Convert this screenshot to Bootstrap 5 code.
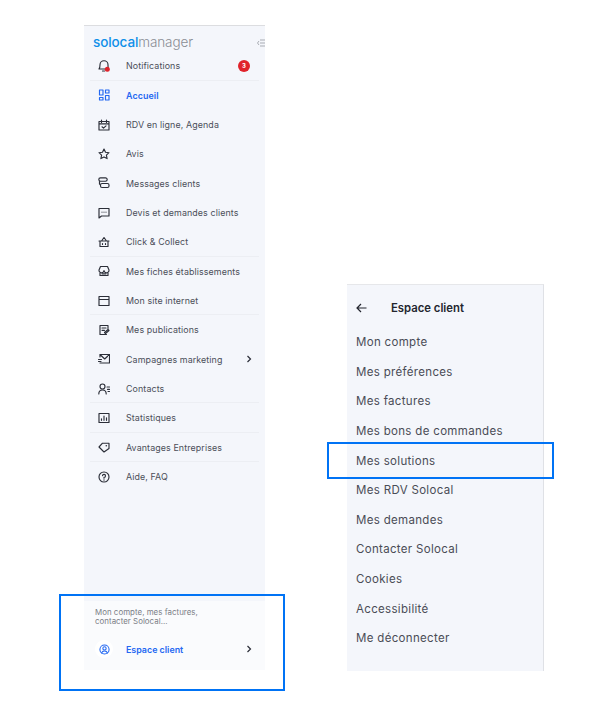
<!DOCTYPE html>
<html lang="fr">
<head>
<meta charset="utf-8">
<title>Solocal manager</title>
<link href="https://cdn.jsdelivr.net/npm/bootstrap@5.3.0/dist/css/bootstrap.min.css" rel="stylesheet">
<style>
html,body{height:717px;overflow:hidden}
body{font-family:"Inter","Liberation Sans",sans-serif;background:#fff;color:#3c3f4a;position:relative}
.stage{height:717px;padding:25px 56px 0 84px;gap:82px}
.sidepanel{width:181px;height:645px;background:#f4f6fb;border-top:1px solid #dcdde0}
.logoline{height:25.2px;padding:6px 0 0 9px;position:relative}
.logotext{display:block;font-size:13.5px;line-height:20px;letter-spacing:-.1px}
.logoa{color:#0f8fe9;font-weight:500}
.logob{color:#8a8d94;font-weight:300}
.collapse-ic{position:absolute;right:0;top:13px}
.menu-row{height:29.35px;padding-left:14px;padding-right:13px;font-size:8.9px;color:#4b4e59;letter-spacing:.1px}
.menu-row svg.mi{width:12px;height:12px;flex:none;margin-right:16px}
.menu-row.ruled{position:relative}
.menu-row.ruled::after{content:"";position:absolute;left:6px;right:6px;bottom:0;height:1px;background:#eceef3}
.menu-row.active{color:#2468f2;font-weight:600}
.redcount{width:12px;height:12px;background:#e0232b;color:#fff;font-size:6px;font-weight:700;border-radius:50%;margin-right:2px}
.footzone{height:69px;background:#fafbfd;padding:7px 11px 0}
.foottext{font-size:7.9px;line-height:9.2px;color:#7b7e87;letter-spacing:.03px}
.footrow{margin-top:14px;height:18px;color:#2468f2;font-size:8.9px;font-weight:600;padding-right:2px}
.footdisc{width:18px;height:18px;background:#fff;border-radius:50%;margin-right:13px;flex:none}
.subpanel{width:197px;height:387px;margin-top:259px;background:#f4f6fb;border-right:1px solid #dfe1e6;border-top:1px solid #e6e7ea;padding:0 9px}
.subhead{height:40px;margin-top:3px;font-size:11.3px;font-weight:600;color:#23252e}
.subhead svg{margin-right:24px;flex:none}
.subitem{height:29.6px;font-size:11.5px;color:#4a4c56;letter-spacing:.32px}
.bluebox{position:absolute;border:2px solid #0073f5;pointer-events:none}
.box-a{left:59px;top:594px;width:226px;height:97px}
.box-b{left:327px;top:442px;width:227px;height:37px}
svg .s{fill:none;stroke:#2b2e38;stroke-width:1.15;stroke-linecap:round;stroke-linejoin:round}
svg .b{fill:none;stroke:#2468f2;stroke-width:1.15;stroke-linecap:round;stroke-linejoin:round}
</style>
</head>
<body>
<div class="stage d-flex align-items-start">
  <nav class="sidepanel d-flex flex-column">
    <div class="logoline">
      <span class="logotext"><span class="logoa">solocal</span><span class="logob">manager</span></span>
      <svg class="collapse-ic" width="8" height="8" viewBox="0 0 8 8"><path d="M3 1H8M3 4H8M3 7H8M2 2 0.5 4 2 6" fill="none" stroke="#a9acb3" stroke-width="1"/></svg>
    </div>
    <div class="menu-row ruled d-flex align-items-center">
      <svg class="mi" viewBox="0 0 12 12"><path class="s" d="M1 9c.8-.8 1-2.500 1-4.300a4 4 0 0 1 8 0c0 1 0 2 .2 2.800M1 9h6M4.500 11h2"/><circle cx="9.300" cy="9.300" r="2.500" fill="#e0232b"/></svg>
      <span class="flex-grow-1">Notifications</span>
      <span class="redcount d-flex align-items-center justify-content-center">3</span>
    </div>
    <div class="menu-row active d-flex align-items-center">
      <svg class="mi" viewBox="0 0 12 12"><path class="b" d="M1.500 1h3.500v5H1.500zM7.500 1H11v3H7.500zM1.500 8.500h3.500V11H1.500zM7.500 6.500H11V11H7.500z"/></svg>
      <span>Accueil</span>
    </div>
    <div class="menu-row d-flex align-items-center">
      <svg class="mi" viewBox="0 0 12 12"><path class="s" d="M1 2.500h10V11H1zM1 4.800h10M3.500 1v2.500M8.500 1v2.500M4 7.800l1.500 1.300L8 6.800"/></svg>
      <span>RDV en ligne, Agenda</span>
    </div>
    <div class="menu-row d-flex align-items-center">
      <svg class="mi" viewBox="0 0 12 12"><path class="s" d="M6 1l1.500 3.300 3.500.4-2.600 2.400.7 3.500L6 8.900 2.900 10.600l.7-3.500L1 4.700l3.500-.4z"/></svg>
      <span>Avis</span>
    </div>
    <div class="menu-row d-flex align-items-center">
      <svg class="mi" viewBox="0 0 12 12"><path class="s" d="M2.500 .8h5a1.700 1.700 0 0 1 0 3.400h-5a1.700 1.700 0 0 1 0-3.400zM4 6.500h5.500a1.500 1.500 0 0 1 1.500 1.500v1a1.500 1.500 0 0 1-1.500 1.500H4A1.500 1.500 0 0 1 2.500 9V8A1.500 1.500 0 0 1 4 6.500zM1.500 4.200v3"/></svg>
      <span>Messages clients</span>
    </div>
    <div class="menu-row d-flex align-items-center">
      <svg class="mi" viewBox="0 0 12 12"><path class="s" d="M1 1.500h10V9H3.500L1 11z"/><path d="M3.500 5.200h1M5.500 5.200h1M7.500 5.200h1" stroke="#2b2e38" stroke-width="1"/></svg>
      <span>Devis et demandes clients</span>
    </div>
    <div class="menu-row ruled d-flex align-items-center">
      <svg class="mi" viewBox="0 0 12 12"><path class="s" d="M1 5h10M2 5v5.500h8V5M3.500 5 6 1.500 8.500 5M4.500 7.500v1M7.500 7.500v1"/></svg>
      <span>Click &amp; Collect</span>
    </div>
    <div class="menu-row d-flex align-items-center">
      <svg class="mi" viewBox="0 0 12 12"><path class="s" d="M2.500 1.500h7L11 5a2 2 0 0 1-5 .5A2 2 0 0 1 1 5zM2 7v3.500h8V7M4 8.800h4"/></svg>
      <span>Mes fiches établissements</span>
    </div>
    <div class="menu-row ruled d-flex align-items-center">
      <svg class="mi" viewBox="0 0 12 12"><path class="s" d="M1 1.500h10v9H1zM1 4.500h10"/></svg>
      <span>Mon site internet</span>
    </div>
    <div class="menu-row d-flex align-items-center">
      <svg class="mi" viewBox="0 0 12 12"><path class="s" d="M10 4.500V1.500H2v9h6.500M4 4h4M4 6.300h2.500M6.500 8.500l3.500-3 1 1-3.500 3z"/></svg>
      <span>Mes publications</span>
    </div>
    <div class="menu-row d-flex align-items-center">
      <svg class="mi" viewBox="0 0 12 12"><path class="s" d="M2 4V1.500h9.500V10H2M2 1.500 6.700 6l4.800-4.500M.5 6.500h3M.5 8.500h2.500"/></svg>
      <span class="flex-grow-1">Campagnes marketing</span>
      <svg width="6" height="8" viewBox="0 0 6 8"><path d="M1.500 1l3 3-3 3" fill="none" stroke="#2b2e38" stroke-width="1.200"/></svg>
    </div>
    <div class="menu-row ruled d-flex align-items-center">
      <svg class="mi" viewBox="0 0 12 12"><circle class="s" cx="4.500" cy="3.500" r="2.500"/><path class="s" d="M.8 11c0-2.500 1.500-4 3.700-4s3.700 1.500 3.700 4M9 4h2.500M9.500 6.300h2M10 8.500h1.500"/></svg>
      <span>Contacts</span>
    </div>
    <div class="menu-row ruled d-flex align-items-center">
      <svg class="mi" viewBox="0 0 12 12"><path class="s" d="M1 1.500h10v9H1zM3.500 8.300V6.800M6 8.300V4M8.500 8.300V5.800"/></svg>
      <span>Statistiques</span>
    </div>
    <div class="menu-row ruled d-flex align-items-center">
      <svg class="mi" viewBox="0 0 12 12"><path class="s" d="M1 6 4.500 2.200H11v5.300L6 11z"/><circle cx="8.300" cy="4.700" r=".8" fill="#2b2e38"/></svg>
      <span>Avantages Entreprises</span>
    </div>
    <div class="menu-row d-flex align-items-center">
      <svg class="mi" viewBox="0 0 12 12"><circle class="s" cx="6" cy="6" r="5"/><path class="s" d="M4.500 4.700A1.500 1.500 0 1 1 6 6.400v.8"/><circle cx="6" cy="9" r=".7" fill="#2b2e38"/></svg>
      <span>Aide, FAQ</span>
    </div>
    <div class="flex-grow-1"></div>
    <div class="footzone">
      <div class="foottext">Mon compte, mes factures,<br>contacter Solocal...</div>
      <div class="footrow d-flex align-items-center">
        <span class="footdisc d-flex align-items-center justify-content-center">
          <svg width="11" height="11" viewBox="0 0 12 12"><circle class="b" cx="6" cy="6" r="5"/><circle class="b" cx="6" cy="4.800" r="1.800"/><path class="b" d="M2.800 9.800c.5-1.500 1.700-2.200 3.200-2.200s2.700.7 3.200 2.200"/></svg>
        </span>
        <span class="flex-grow-1">Espace client</span>
        <svg width="6" height="8" viewBox="0 0 6 8"><path d="M1.500 1l3 3-3 3" fill="none" stroke="#2b2e38" stroke-width="1.200"/></svg>
      </div>
    </div>
  </nav>
  <aside class="subpanel">
    <div class="subhead d-flex align-items-center">
      <svg width="11" height="10" viewBox="0 0 11 10"><path d="M10.500 5H1M5 1 1 5l4 4" fill="none" stroke="#23252e" stroke-width="1.200"/></svg>
      <span>Espace client</span>
    </div>
    <div class="subitem d-flex align-items-center">Mon compte</div>
    <div class="subitem d-flex align-items-center">Mes préférences</div>
    <div class="subitem d-flex align-items-center">Mes factures</div>
    <div class="subitem d-flex align-items-center">Mes bons de commandes</div>
    <div class="subitem d-flex align-items-center">Mes solutions</div>
    <div class="subitem d-flex align-items-center">Mes RDV Solocal</div>
    <div class="subitem d-flex align-items-center">Mes demandes</div>
    <div class="subitem d-flex align-items-center">Contacter Solocal</div>
    <div class="subitem d-flex align-items-center">Cookies</div>
    <div class="subitem d-flex align-items-center">Accessibilité</div>
    <div class="subitem d-flex align-items-center">Me déconnecter</div>
  </aside>
</div>
<div class="bluebox box-a"></div>
<div class="bluebox box-b"></div>
</body>
</html>
